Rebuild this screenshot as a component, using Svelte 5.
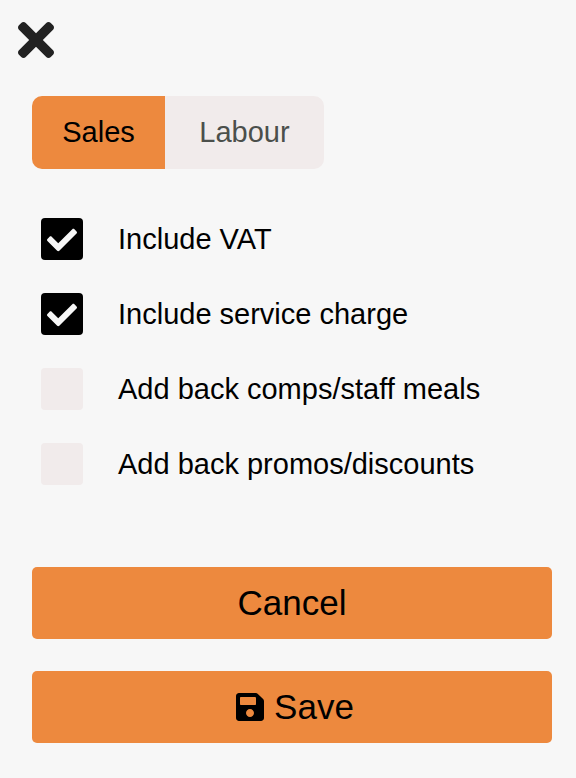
<script lang="ts">
  let tab = $state<'sales' | 'labour'>('sales');

  let options = $state([
    { id: 'vat', label: 'Include VAT', checked: true },
    { id: 'service', label: 'Include service charge', checked: true },
    { id: 'comps', label: 'Add back comps/staff meals', checked: false },
    { id: 'promos', label: 'Add back promos/discounts', checked: false },
  ]);
</script>

<div class="settings">
  <button class="close" aria-label="Close">
    <svg viewBox="0 80 352 352" aria-hidden="true">
      <path d="M242.72 256l100.07-100.07c12.28-12.28 12.28-32.19 0-44.48l-22.24-22.24c-12.28-12.28-32.19-12.28-44.48 0L176 189.28 75.93 89.21c-12.28-12.28-32.19-12.28-44.48 0L9.21 111.45c-12.28 12.28-12.28 32.19 0 44.48L109.28 256 9.21 356.07c-12.28 12.28-12.28 32.19 0 44.48l22.24 22.24c12.28 12.28 32.2 12.28 44.48 0L176 322.72l100.07 100.07c12.28 12.28 32.2 12.28 44.48 0l22.24-22.24c12.28-12.28 12.28-32.19 0-44.48L242.72 256z" />
    </svg>
  </button>

  <div class="content">
    <div class="tabs">
      <button class="tab" class:active={tab === 'sales'} onclick={() => (tab = 'sales')}>Sales</button>
      <button class="tab" class:active={tab === 'labour'} onclick={() => (tab = 'labour')}>Labour</button>
    </div>

    <div class="options">
      {#each options as option (option.id)}
        <label class="option" for={option.id}>
          <span class="box">
            <input type="checkbox" id={option.id} bind:checked={option.checked} />
            {#if option.checked}
              <svg viewBox="0 0 512 512" aria-hidden="true">
                <path d="M173.898 439.404l-166.4-166.4c-9.997-9.997-9.997-26.206 0-36.204l36.203-36.204c9.997-9.998 26.207-9.998 36.204 0L192 312.69 432.095 72.596c9.997-9.997 26.207-9.997 36.204 0l36.203 36.204c9.997 9.997 9.997 26.206 0 36.204l-294.4 294.401c-9.998 9.997-26.207 9.997-36.204-.001z" />
              </svg>
            {/if}
          </span>
          {option.label}
        </label>
      {/each}
    </div>

    <div class="actions">
      <button class="btn">Cancel</button>
      <button class="btn">
        <svg viewBox="0 32 448 448" aria-hidden="true">
          <path d="M433.941 129.941l-83.882-83.882A48 48 0 0 0 316.118 32H48C21.49 32 0 53.49 0 80v352c0 26.51 21.49 48 48 48h352c26.51 0 48-21.49 48-48V163.882a48 48 0 0 0-14.059-33.941zM224 416c-35.346 0-64-28.654-64-64 0-35.346 28.654-64 64-64s64 28.654 64 64c0 35.346-28.654 64-64 64zm96-304.52V212c0 6.627-5.373 12-12 12H76c-6.627 0-12-5.373-12-12V108c0-6.627 5.373-12 12-12h228.52c3.183 0 6.235 1.264 8.485 3.515l3.48 3.48A11.996 11.996 0 0 1 320 111.48z" />
        </svg>
        Save
      </button>
    </div>
  </div>
</div>

<style>
  :global(body) { margin: 0; background: #f7f7f7; }
  .settings { padding: 22px 24px 35px 18px; font-family: "Liberation Sans", Arial, sans-serif; font-size: 29px; color: #000; }
  button { border: none; font: inherit; color: inherit; cursor: pointer; }
  .close { display: block; padding: 0; background: none; }
  .close svg { display: block; width: 36px; height: 36px; fill: #222; }
  .content { padding: 38px 0 0 14px; }
  .tabs { display: inline-grid; grid-template-columns: 133px 159px; vertical-align: top; border-radius: 10px; overflow: hidden; }
  .tab { height: 73px; padding: 0; background: #f1ebeb; color: #4b4f4b; }
  .tab.active { background: #ed893e; color: #000; }
  .options { display: flex; flex-direction: column; gap: 33px; margin-top: 49px; padding-left: 9px; }
  .option { display: flex; align-items: center; gap: 35px; line-height: 42px; cursor: pointer; }
  .box { display: grid; place-items: center; flex-shrink: 0; }
  .box input { grid-area: 1 / 1; appearance: none; width: 42px; height: 42px; margin: 0; border-radius: 4px; background: #f1ebeb; cursor: pointer; }
  .box input:checked { background: #000; }
  .box svg { grid-area: 1 / 1; width: 30px; height: 30px; padding-top: 2px; fill: #f7f7f7; pointer-events: none; }
  .actions { display: flex; flex-direction: column; gap: 32px; margin-top: 82px; }
  .btn { display: flex; align-items: center; justify-content: center; height: 72px; border-radius: 5px; background: #ed893e; font-size: 35px; }
  .btn svg { width: 28px; height: 28px; margin: 0 10px 0 6px; }
</style>
